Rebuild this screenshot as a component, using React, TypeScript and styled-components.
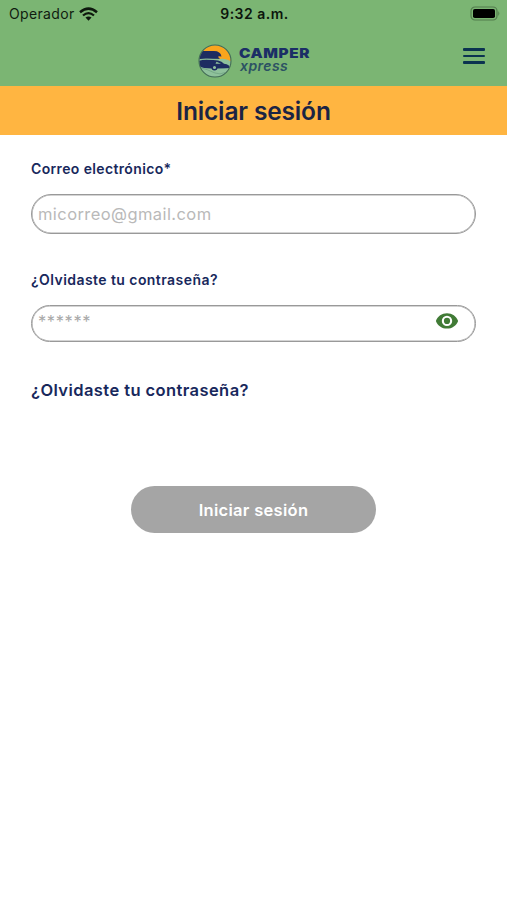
import React from 'react';
import styled, { createGlobalStyle } from 'styled-components';

const GlobalStyle = createGlobalStyle`
  * { box-sizing: border-box; }
  body { margin: 0; background: #fff; font-family: Inter, Roboto, sans-serif; }
`;

const navy = '#18285c';

const Screen = styled.div`
  width: 100%;
  min-height: 900px;
  background: #fff;
`;

const Top = styled.header`
  height: 86px;
  background: #7bb573;
`;

const StatusBar = styled.div`
  height: 28px;
  padding: 0 7px 0 9px;
  display: grid;
  grid-template-columns: 1fr auto 1fr;
  align-items: center;
  color: #101c10;
`;

const Carrier = styled.div`
  display: flex;
  align-items: center;
  gap: 4px;
  font-size: 14px;
  line-height: 28px;
  letter-spacing: 0.35px;
`;

const Clock = styled.div`
  font-size: 14px;
  line-height: 28px;
  font-weight: 600;
  letter-spacing: 0.5px;
  color: #0c160c;
`;

const Battery = styled.svg`
  justify-self: end;
  margin-top: -2px;
`;

const NavBar = styled.div`
  height: 58px;
  padding: 0 22px 0 198px;
  display: flex;
  align-items: flex-start;
  justify-content: space-between;
`;

const Brand = styled.div`
  display: flex;
  gap: 7px;
  padding-top: 16px;
`;

const BrandText = styled.div`
  padding-top: 2px;
`;

const BrandName = styled.div`
  color: #1b2f66;
  font-size: 13px;
  line-height: 14px;
  font-weight: 900;
  transform: scaleX(1.18);
  transform-origin: left;
  letter-spacing: 0.5px;
`;

const BrandSub = styled.div`
  font-size: 14px;
  line-height: 14px;
  margin-top: -1px;
  font-weight: 600;
  font-style: oblique 6deg;
  letter-spacing: 0.45px;
  padding-left: 1px;
  color: #2c5263;
`;

const MenuButton = styled.button`
  display: flex;
  flex-direction: column;
  gap: 4px;
  width: 22px;
  margin-top: 20px;
  padding: 0;
  border: 0;
  background: none;
`;

const MenuLine = styled.span`
  height: 2.5px;
  width: 22px;
  border-radius: 1px;
  background: #0b3350;
`;

const Title = styled.h1`
  margin: 0;
  height: 49px;
  display: flex;
  align-items: center;
  justify-content: center;
  background: #ffb541;
  color: #1b2444;
  font-size: 24.5px;
  font-weight: 600;
  letter-spacing: -0.15px;
`;

const Form = styled.form`
  padding: 24px 31px 0;
  display: flex;
  flex-direction: column;
`;

const Label = styled.label`
  height: 20px;
  line-height: 20px;
  color: ${navy};
  font-size: 14px;
  font-weight: 600;
  letter-spacing: ${(p: { $track: number }) => p.$track}px;
`;

const Field = styled.div<{ $height: number; $after: number }>`
  display: flex;
  align-items: center;
  justify-content: space-between;
  height: ${(p) => p.$height}px;
  margin: 15px 0 ${(p) => p.$after}px;
  padding: 0 16px 0 6px;
  border: 1px solid #999;
  border-radius: 20px;
  box-shadow: inset 0 0 0 0.6px #aaa;
`;

const Input = styled.input<{ $track: number; $secret?: boolean }>`
  flex: 1;
  min-width: 0;
  height: ${(p) => (p.$secret ? 28 : 36)}px;
  padding: ${(p) => (p.$secret ? '0 0 5px' : '0')};
  border: 0;
  outline: 0;
  background: none;
  font: 400 16.5px Inter, sans-serif;
  letter-spacing: ${(p) => p.$track}px;
  &::placeholder { color: ${(p) => (p.$secret ? '#aaa' : '#b9b9b9')}; opacity: 1; }
`;

const ForgotLink = styled.a`
  height: 24px;
  line-height: 24px;
  color: ${navy};
  font-size: 16.5px;
  font-weight: 600;
  letter-spacing: 0.42px;
`;

const Submit = styled.button`
  align-self: center;
  width: 245px;
  height: 47px;
  margin-top: 84px;
  padding: 0;
  border: 0;
  border-radius: 24px;
  background: #a5a5a5;
  color: #fff;
  font: 600 16.5px Inter, sans-serif;
  letter-spacing: 0.3px;
`;

const EyeIcon = styled.svg`
  margin-top: -5px;
`;

const Wifi = () => (
  <svg width="19" height="14" viewBox="0 0 19 14" fill="none" stroke="#0d180d">
    <path d="M1 5.2Q9.5-2 18 5.2" strokeWidth="2.5" />
    <path d="M4 8.5Q9.5 3.8 15 8.5" strokeWidth="2.3" />
    <path d="M6.5 10.6Q9.5 8.4 12.5 10.6L9.5 13.8Z" fill="#0d180d" stroke="none" />
  </svg>
);

const Logo = () => (
  <svg width="34" height="34" viewBox="0 0 34 34">
    <defs>
      <clipPath id="badge"><circle cx="17" cy="17" r="15.8" /></clipPath>
    </defs>
    <g clipPath="url(#badge)">
      <path d="M0 0h34v34H0z" fill="#8fc19b" />
      <path d="M0 0h34v18Q27 13 20 15.500L0 14Z" fill="#f9a51d" />
      <path d="M0 7h16q6.500 0 7.500 5.500-4.500-1-3 1l1.500 1.500-22 .5Z" fill="#1d2c61" />
      <path d="M0 17q3-1.200 9-1.200 7 .2 11 .8 4 .8 6 3.200 6 .5 6 4.700H0Z" fill="#1d2c61" />
      <path d="M0 15.700q9-1.200 15-.4 10-1.300 19 3.200" fill="none" stroke="#8fc19b" strokeWidth="1" />
      <path d="M18.500 17.700l4.500 2h-5.500Z" fill="#8fc19b" />
      <path d="M0 22q5 2 12 2.800 9 .7 22-.8v10H0Z" fill="#8fc19b" />
      <path d="M1 23.500q8 1.500 16 5.500 5 2 10-.5" fill="none" stroke="#70a383" strokeWidth=".8" />
      <circle cx="16.500" cy="23.500" r="2.300" fill="#8fc19b" stroke="#1d2c61" strokeWidth="1.500" />
    </g>
    <circle cx="17" cy="17" r="16" fill="none" stroke="#436c57" strokeWidth="1.100" />
  </svg>
);

const Eye = () => (
  <EyeIcon width="24" height="18" viewBox="0 0 24 18">
    <path
      fill="#417b36"
      fillRule="evenodd"
      d="M12 1.200C6.900 1.200 2.600 4.300.9 8.900c1.700 4.600 6 7.700 11.100 7.700s9.400-3.100 11.100-7.700C21.400 4.300 17.100 1.200 12 1.200Zm0 12.900a5.200 5.200 0 1 1 0-10.400 5.200 5.200 0 0 1 0 10.400Zm0-2.100a3.100 3.100 0 1 0 0-6.200 3.100 3.100 0 0 0 0 6.200Z"
    />
  </EyeIcon>
);

export default function App() {
  return (
    <Screen>
      <GlobalStyle />
      <Top>
        <StatusBar>
          <Carrier>Operador <Wifi /></Carrier>
          <Clock>9:32 a.m.</Clock>
          <Battery width="30" height="15" viewBox="0 0 30 15">
            <rect x="1" y="1" width="26" height="13" rx="4" fill="none" stroke="#527c4d" strokeWidth="1.200" />
            <rect x="3" y="3" width="22" height="9" rx="1.800" fill="#000" />
            <path d="M28.300 5q2 2.500 0 5Z" fill="#527c4d" />
          </Battery>
        </StatusBar>
        <NavBar>
          <Brand>
            <Logo />
            <BrandText>
              <BrandName>CAMPER</BrandName>
              <BrandSub>xpress</BrandSub>
            </BrandText>
          </Brand>
          <MenuButton type="button" aria-label="Menú">
            <MenuLine /><MenuLine /><MenuLine />
          </MenuButton>
        </NavBar>
      </Top>
      <Title>Iniciar sesión</Title>
      <Form>
        <Label htmlFor="email" $track={0.36}>Correo electrónico*</Label>
        <Field $height={40} $after={36}>
          <Input id="email" type="email" placeholder="micorreo@gmail.com" $track={0.42} />
        </Field>
        <Label htmlFor="password" $track={0.44}>¿Olvidaste tu contraseña?</Label>
        <Field $height={37} $after={36}>
          <Input id="password" type="password" placeholder="******" $track={0.6} $secret />
          <Eye />
        </Field>
        <ForgotLink>¿Olvidaste tu contraseña?</ForgotLink>
        <Submit type="button">Iniciar sesión</Submit>
      </Form>
    </Screen>
  );
}
